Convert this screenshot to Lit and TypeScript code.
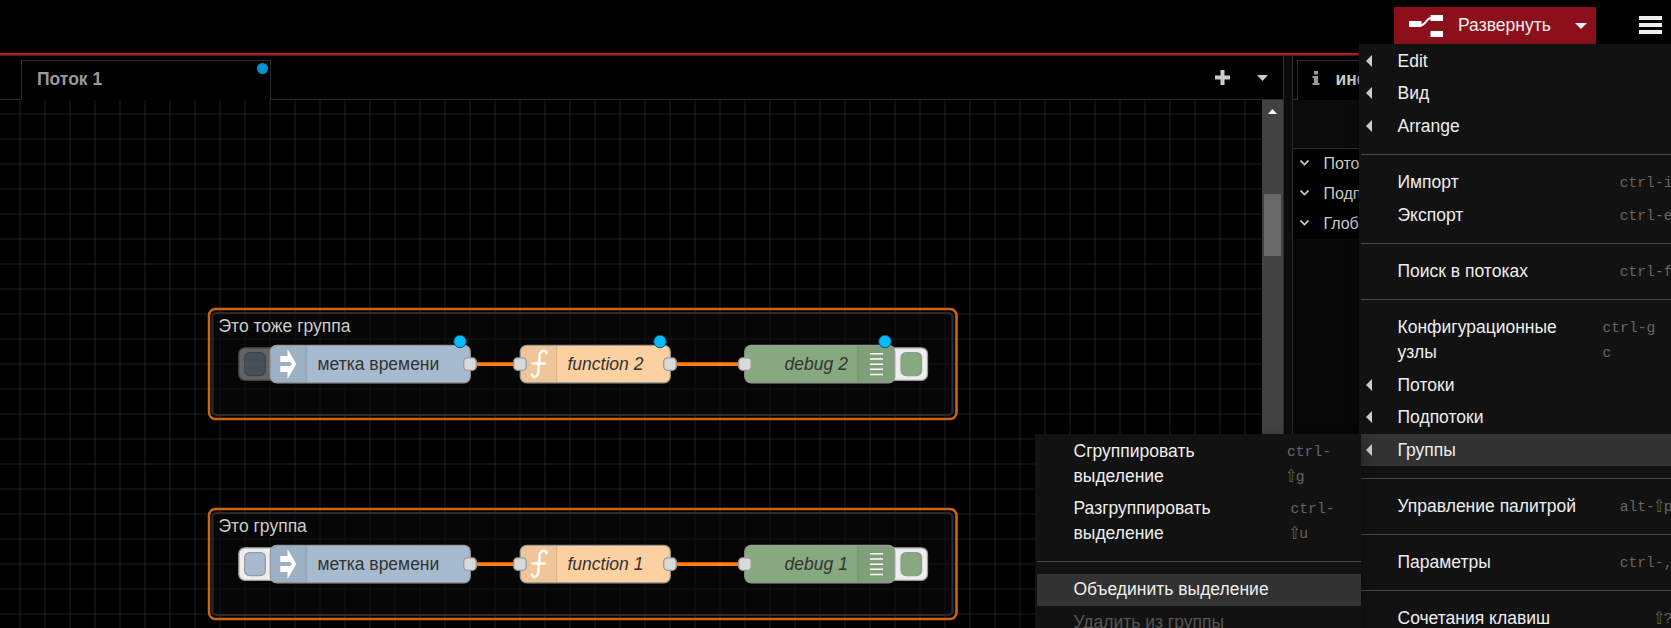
import { LitElement, html, svg, css, nothing } from "lit";
import { customElement, property } from "lit/decorators.js";

interface Item { label?: string; lines?: string[]; keys?: string[]; keysWidth?: number; sub?: boolean; active?: boolean; off?: boolean; rule?: boolean; }

const MAIN: Item[] = [
  { label: "Edit", sub: true },
  { label: "Вид", sub: true },
  { label: "Arrange", sub: true },
  { rule: true },
  { label: "Импорт", keys: ["ctrl-i"] },
  { label: "Экспорт", keys: ["ctrl-e"] },
  { rule: true },
  { label: "Поиск в потоках", keys: ["ctrl-f"] },
  { rule: true },
  { lines: ["Конфигурационные", "узлы"], keys: ["ctrl-g", "c"], keysWidth: 70 },
  { label: "Потоки", sub: true },
  { label: "Подпотоки", sub: true },
  { label: "Группы", sub: true, active: true },
  { rule: true },
  { label: "Управление палитрой", keys: ["alt-⇧p"] },
  { rule: true },
  { label: "Параметры", keys: ["ctrl-,"] },
  { rule: true },
  { label: "Сочетания клавиш", keys: ["⇧?"] },
];

const GROUPS: Item[] = [
  { lines: ["Сгруппировать", "выделение"], keys: ["ctrl-", "⇧g"], keysWidth: 74 },
  { lines: ["Разгруппировать", "выделение"], keys: ["ctrl-", "⇧u"], keysWidth: 70.5 },
  { rule: true },
  { label: "Объединить выделение", active: true },
  { label: "Удалить из группы", off: true },
];

@customElement("nr-menu")
class NrMenu extends LitElement {
  @property({ attribute: false }) items: Item[] = [];
  static styles = css`
    :host { display: block; box-sizing: border-box; background: #121212; color: #eee; padding: 1px 0 0 2px;
      font: 17.5px/25px "Liberation Sans", Arial, sans-serif; box-shadow: 0 6px 12px rgba(0,0,0,.4); }
    .row { display: flex; height: 32.5px; box-sizing: border-box; padding: 3.8px 0 0 5px; white-space: nowrap; }
    .row.tall { height: 57.5px; }
    .row.active { background: #323232; }
    .row.off { color: #555; }
    .mark { width: 31.5px; flex: none; padding-top: 6.2px; box-sizing: border-box; }
    .mark svg { display: block; }
    .label { flex: 1; }
    .keys { font-family: "Liberation Mono", monospace; font-size: 14.67px; color: #666; padding-top: 1px; }
    .keys div { height: 25px; }
    .shift { display: inline-block; width: 8.8px; font: 14.67px/16px "DejaVu Sans", sans-serif; transform: scale(1, 1.2); transform-origin: 0 60%; text-indent: -1.7px; }
    .rule { height: 23.75px; box-sizing: border-box; padding-top: 11.3px; }
    .rule div { height: 1px; background: #4a4a4a; }
  `;
  keyText(k: string) {
    return [...k].map(c => c === "⇧" ? html`<span class="shift">${c}</span>` : c);
  }
  render() {
    return this.items.map(i => i.rule
      ? html`<div class="rule"><div></div></div>`
      : html`<div class="row ${i.lines ? "tall" : ""} ${i.active ? "active" : ""} ${i.off ? "off" : ""}">
          <div class="mark">${i.sub ? html`<svg width="6" height="12"><path d="M0 6L6 0V12Z" fill="#ccc"/></svg>` : nothing}</div>
          <div class="label">${(i.lines ?? [i.label]).map(l => html`<div>${l}</div>`)}</div>
          ${i.keys ? html`<div class="keys" style=${i.keysWidth ? `width:${i.keysWidth}px` : ""}>${i.keys.map(k => html`<div>${this.keyText(k)}</div>`)}</div>` : nothing}
        </div>`);
  }
}

@customElement("app-root")
class AppRoot extends LitElement {
  static styles = css`
    :host { display: flex; flex-direction: column; position: relative; width: 1671px; height: 628px; overflow: hidden; background: #000;
      font: 17.5px/25px "Liberation Sans", Arial, sans-serif; color: #ccc; }
    .header { height: 53px; flex: none; display: flex; justify-content: flex-end; border-bottom: 2px solid #c7191b; color: #eee; }
    .deploy { margin-top: 7px; width: 202px; height: 37px; box-sizing: border-box; background: #8c101c; display: flex; align-items: center; padding: 0 9px 2px 15px; }
    .deploy-icon { margin: 3px 15px 0 0; }
    .deploy-label { padding-top: 1px; }
    .deploy-caret { margin: 2px 0 0 auto; }
    .burger { margin: 16px 9.5px 0 43px; width: 22.5px; display: flex; flex-direction: column; gap: 3px; }
    .burger div { height: 4px; background: #eee; }
    .main { flex: 1; display: flex; min-height: 0; border-top: 1px solid #262626; }
    .workspace { width: 1283px; display: flex; flex-direction: column; border-right: 1px solid #2b2b2b; }
    .tabs { height: 44px; display: flex; flex: none; }
    .tabs > .edge { width: 21px; border-bottom: 1px solid #2b2b2b; }
    .tab { width: 250px; box-sizing: border-box; margin-top: 4px; border: 1px solid #2b2b2b; border-bottom: 0; display: flex; justify-content: space-between; padding: 6px 2px 0 15px; font-weight: bold; color: #999; }
    .dot { width: 11px; height: 11px; border-radius: 50%; background: #0095d2; margin-top: -4px; }
    .tools { flex: 1; border-bottom: 1px solid #2b2b2b; display: flex; justify-content: flex-end; gap: 27px; padding: 14px 15px 0 0; }
    .tools svg, .info svg { display: block; }
    .caret { margin-top: 5px; }
    .view { flex: 1; display: flex; min-height: 0; }
    .chart { width: 1262px; height: 528px; flex: none; }
    .scroll { flex: 1; background: #424242; display: flex; flex-direction: column; align-items: center; padding: 9px 1px 0 0; }
    .thumb { margin-top: 80px; width: 17px; height: 62px; background: #686868; }
    .separator { width: 8px; background: #0c0c0c; }
    .sidebar { flex: 1; border-left: 1px solid #2b2b2b; display: flex; flex-direction: column; background: #080808; }
    .side-tabs { height: 44px; flex: none; display: flex; background: #000; }
    .side-tabs .edge { width: 4px; border-bottom: 1px solid #2b2b2b; }
    .info { margin-top: 4px; border: 1px solid #2b2b2b; border-bottom: 0; padding: 6px 15px 0 14px; display: flex; gap: 15.5px; font-weight: bold; }
    .info svg { margin-top: 4px; }
    .toolbar { height: 48px; border-bottom: 1px solid #2b2b2b; background: #0b0b0b; }
    .tree { background: #000; font-size: 16px; }
    .tree-row { height: 30px; display: flex; align-items: center; gap: 14px; padding: 0 0 2px 7.4px; box-sizing: border-box; }
    .menu { position: absolute; left: 1359px; top: 44px; width: 313.5px; height: 600px; }
    .submenu { position: absolute; left: 1035px; top: 433.9px; width: 326px; height: 210px; }
    .t { font-size: 17.5px; fill: #333; }
    .i { font-style: italic; }
    .g { font-size: 17.5px; fill: #ccc; }
    .body { stroke: #999; stroke-width: 1.25; }
    .port { fill: #d9d9d9; stroke: #999; stroke-width: 1.25; }
    .wire { stroke: #ff7f0e; stroke-width: 3.75; }
    .changed { fill: #00bcff; stroke: #07577a; stroke-width: 1; }
  `;

  port(x: number) { return svg`<rect class="port" x=${x - 6.25} y="257.75" width="12.5" height="12.5" rx="3.75"/>`; }

  group(dy: number, title: string, n: number, changed: boolean, dim: boolean) {
    const btn = dim ? .4 : 1;
    return svg`<g transform="translate(0 ${dy})">
      <rect x="212.5" y="213" width="740" height="102" rx="4" fill="#0a0a0a" fill-opacity=".6" stroke="#2a2a2a" stroke-width="2.2"/>
      <rect x="209" y="209" width="747.5" height="110" rx="6.5" fill="none" stroke="#cc6611" stroke-width="2.5"/>
      <text class="g" x="218.5" y="231.5">${title}</text>
      <path class="wire" d="M470 264H520M670 264H745"/>
      <g opacity=${btn}>
        <rect x="238.8" y="247.8" width="40" height="32.5" rx="6" fill="#eee" stroke="#999" stroke-width="1.25"/>
        <rect x="244.7" y="252.5" width="20.6" height="23" rx="5" fill="#a6bbcf" stroke="#999" stroke-width="1.25"/>
      </g>
      <rect class="body" x="270.3" y="245.3" width="200" height="37.5" rx="6.25" fill="#a6bbcf"/>
      <path d="M306.500 246V282H276.5Q271 282 271 276.5V251.5Q271 246 276.5 246Z" fill="#000" fill-opacity=".05"/>
      <path d="M306.500 246V282" stroke="#000" stroke-opacity=".1" stroke-width="1.25"/>
      <path d="M287.500 249L296.300 264L287.500 279V272H280.300V266H290.600L292 264L290.600 262H280.300V256H287.500Z" fill="#fff"/>
      <text class="t" x="317.5" y="269.7">метка времени</text>
      ${this.port(470)}
      <rect class="body" x="520.3" y="245.3" width="150" height="37.5" rx="6.25" fill="#fdd0a2"/>
      <path d="M556.500 246V282H526.5Q521 282 521 276.5V251.5Q521 246 526.5 246Z" fill="#000" fill-opacity=".05"/>
      <path d="M556.500 246V282" stroke="#000" stroke-opacity=".1" stroke-width="1.25"/>
      <path d="M546.5 253.300c-.5-3.500-6-3.800-6.800 1.700l-1.400 17c-.5 6-5.500 6-6.300 2.500M532.500 263.500h12" fill="none" stroke="#fff" stroke-width="2.5" stroke-linecap="round"/>
      <text class="t i" x="567.5" y="269.7">function ${n}</text>
      ${this.port(520)}${this.port(670)}
      <rect x="885" y="247.8" width="42.500" height="32.5" rx="6" fill="#eee" stroke="#999" stroke-width="1.25"/>
      <rect x="901" y="252.5" width="20.6" height="23" rx="5" fill="#87a980" stroke="#999" stroke-width="1.25"/>
      <rect class="body" x="744.8" y="245.3" width="150" height="37.5" rx="6.25" fill="#87a980"/>
      <path d="M858 246V282H888.500Q894 282 894 276.5V251.5Q894 246 888.500 246Z" fill="#000" fill-opacity=".05"/>
      <path d="M858 246V282" stroke="#000" stroke-opacity=".12" stroke-width="1.25"/>
      <path d="M870 253.700h13M870 259h13M870 264.200h13M870 269.300h13M870 274.500h13" stroke="#fff" stroke-width="1.6"/>
      <text class="t i" x="784.6" y="269.7">debug ${n}</text>
      ${this.port(745)}
      ${changed ? [460, 660, 885].map(x => svg`<circle class="changed" cx=${x} cy="241.500" r="6.2"/>`) : nothing}
    </g>`;
  }

  render() {
    const xs = Array.from({ length: 50 }, (_, i) => 20 + i * 25);
    const ys = Array.from({ length: 21 }, (_, i) => 14 + i * 25);
    return html`
      <div class="header">
        <div class="deploy">
          <svg class="deploy-icon" width="34" height="22"><path d="M0 6h12.500v6H0zM21.500 0H34v6H21.500zM21.500 16H34v6H21.500z" fill="#fff"/><path d="M12 10.200c4.500 0 5.500-7 10-7.200" fill="none" stroke="#fff" stroke-width="1.9"/></svg>
          <span class="deploy-label">Развернуть</span>
          <svg class="deploy-caret" width="12" height="6"><path d="M0 0H12L6 6Z" fill="#eee"/></svg>
        </div>
        <div class="burger"><div></div><div></div><div></div></div>
      </div>
      <div class="main">
        <div class="workspace">
          <div class="tabs">
            <div class="edge"></div>
            <div class="tab"><span>Поток 1</span><div class="dot"></div></div>
            <div class="tools">
              <svg width="15" height="15"><path d="M5.500 0h4v5.500H15v4H9.500V15h-4V9.500H0v-4h5.500z" fill="#ccc"/></svg>
              <svg class="caret" width="11" height="6"><path d="M0 0H11L5.500 6Z" fill="#ccc"/></svg>
            </div>
          </div>
          <div class="view">
            <svg class="chart" viewBox="0 0 1262 528">
              ${xs.map(x => svg`<path d="M${x} 0V528" stroke="#fff" stroke-opacity=".06" stroke-width="2"/>`)}
              ${ys.map(y => svg`<path d="M0 ${y}H1262" stroke="#fff" stroke-opacity=".06" stroke-width="2"/>`)}
              ${this.group(0, "Это тоже группа", 2, true, true)}
              ${this.group(200, "Это группа", 1, false, false)}
            </svg>
            <div class="scroll">
              <svg width="9" height="5"><path d="M0 5H9L4.500 0Z" fill="#fff"/></svg>
              <div class="thumb"></div>
            </div>
          </div>
        </div>
        <div class="separator"></div>
        <div class="sidebar">
          <div class="side-tabs">
            <div class="edge"></div>
            <div class="info"><svg width="8" height="14"><path d="M2 0h4v3.500H2zM.500 5H6v7h1.500v2H.500v-2H2V7H.500z" fill="#999"/></svg><span>информация</span></div>
          </div>
          <div class="toolbar"></div>
          <div class="tree">
            ${["Потоки", "Подпотоки", "Глобальные"].map(t => html`<div class="tree-row"><svg width="9" height="6"><path d="M.500.500L4.500 4.500L8.500.500" fill="none" stroke="#ccc" stroke-width="1.700"/></svg><span>${t}</span></div>`)}
          </div>
        </div>
      </div>
      <nr-menu class="menu" .items=${MAIN}></nr-menu>
      <nr-menu class="submenu" .items=${GROUPS}></nr-menu>`;
  }
}
